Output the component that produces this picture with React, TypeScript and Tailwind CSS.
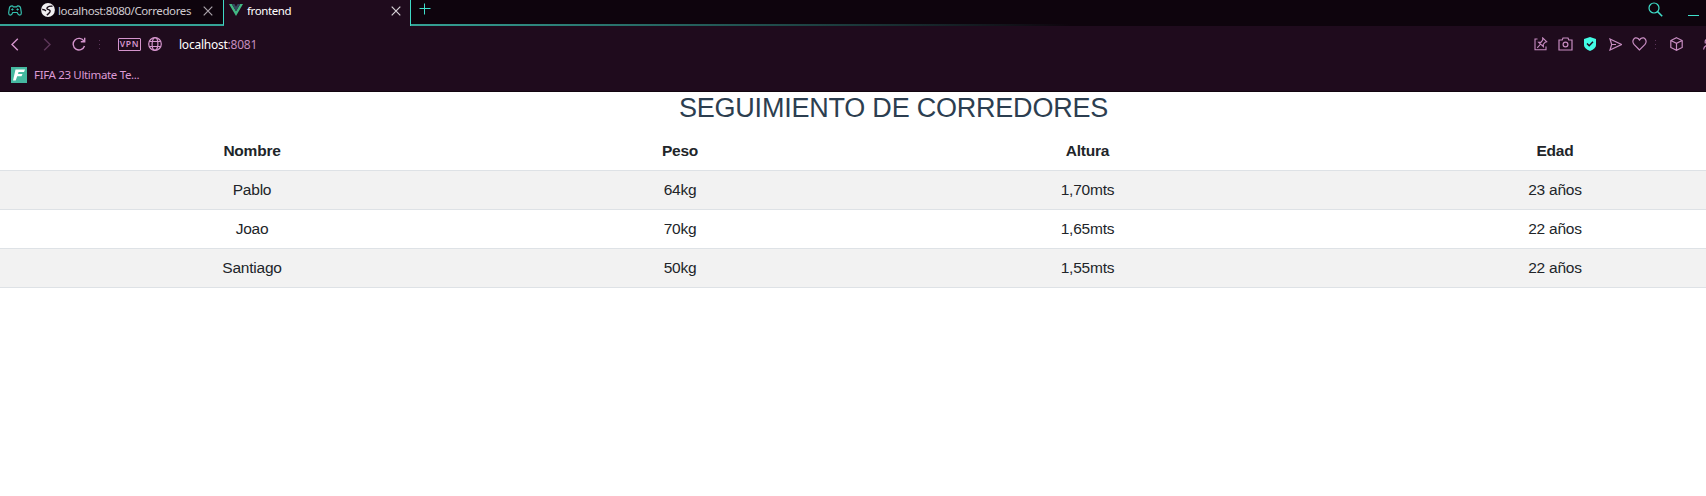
import type { ReactNode } from 'react';

type IconProps = { className?: string; children: ReactNode; viewBox?: string };

function Icon({ className = '', children, viewBox = '0 0 16 16' }: IconProps) {
  return (
    <svg
      viewBox={viewBox}
      fill="none"
      stroke="currentColor"
      strokeWidth="1.2"
      className={`shrink-0 ${className}`}
    >
      {children}
    </svg>
  );
}

function Dots({ className = '' }: { className?: string }) {
  return (
    <div className={`flex w-[1px] shrink-0 flex-col gap-[3px] ${className}`}>
      <i className="h-[1px] w-[1px] bg-[#5a3358]" />
      <i className="h-[1px] w-[1px] bg-[#5a3358]" />
      <i className="h-[1px] w-[1px] bg-[#5a3358]" />
    </div>
  );
}

function TabStrip() {
  return (
    <div className="flex h-[26px] bg-[#0e040d] text-[11.5px] leading-[22px]">
      <div className="flex w-[224px] shrink-0 border-b-2 border-r border-b-[#35a396] border-r-[#3fd9c6] pl-[8px]">
        <Icon className="mt-[5px] h-[11px] w-[14px] text-[#35bfae]" viewBox="0 0 14 11">
          <path d="M4 .8Q1.800.8 1.400 3L.7 7.500Q.5 10 2.300 10.200q1.500 0 2.500-2.700h4.400q1 2.700 2.500 2.700 1.800-.2 1.600-2.700L12.600 3Q12.200.8 10 .8q-.8 0-1.300 1H5.300Q4.800.8 4 .8Z" />
          <path d="M3.200 4.500h2.400M8.400 4.500h2.400M4.400 3.300v2.400M9.600 3.300v2.400" strokeWidth=".9" />
        </Icon>
        <svg viewBox="0 0 14 14" className="ml-[19px] mt-[3px] h-[14px] w-[14px] shrink-0">
          <circle cx="7" cy="7" r="6.900" fill="#f1eff1" />
          <path
            d="M11.500 3.200Q8.500 2.800 6.500 4.200 5 6 7.500 6.700 9.800 7.300 8.800 9.200 7.800 11 5.800 12M1.200 6.500Q3.500 6.300 5 8"
            fill="none"
            stroke="#170b16"
            strokeWidth="1.400"
          />
        </svg>
        <span className="ml-[3px] w-[134px] shrink-0 whitespace-nowrap tracking-[-.39px] text-[#d0cbd0]">
          localhost:8080/Corredores
        </span>
        <Icon className="ml-[11px] mt-[6px] h-[10px] w-[10px] text-[#aaa3aa]" viewBox="0 0 10 10">
          <path d="m.7.7 8.600 8.600m0-8.600L.7 9.300" />
        </Icon>
      </div>
      <div className="flex w-[186px] shrink-0 bg-[#1f0b1d] pl-[5px]">
        <svg viewBox="0 0 14 12" className="mt-[4px] h-[12px] w-[14px] shrink-0">
          <path d="M0 0h2.800L7 7.300 11.200 0H14L7 12Z" fill="#42b883" />
          <path d="M2.800 0h2.600L7 2.800 8.600 0h2.600L7 7.300Z" fill="#35495e" />
        </svg>
        <span className="ml-[4px] w-[130px] tracking-[-.39px] text-white">frontend</span>
        <Icon className="ml-[14px] mt-[6px] h-[10px] w-[10px] text-[#d8d3d8]" viewBox="0 0 10 10">
          <path d="m.7.7 8.600 8.600m0-8.600L.7 9.300" />
        </Icon>
      </div>
      <div className="flex flex-1 flex-col border-l border-[#3fd9c6]">
        <div className="flex flex-1 items-start">
          <Icon className="ml-[8px] mt-[3px] h-[12px] w-[12px] text-[#3fe0cb]" viewBox="0 0 12 12">
            <path d="M.5 5.500h11M5.500.5v11" strokeWidth="1" />
          </Icon>
          <Icon className="ml-auto mr-[25px] mt-[2px] h-[15px] w-[15px] text-[#3fe0cb]" viewBox="0 0 15 15">
            <circle cx="6" cy="6" r="5" />
            <path d="m9.600 9.600 4.600 4.600" strokeWidth="1.500" />
          </Icon>
          <div className="mr-[7px] mt-[15px] h-[1px] w-[11px] bg-[#3fe0cb]" />
        </div>
        <div className="h-[2px] w-[660px] bg-linear-to-r from-[#35a396] to-transparent" />
        </div>
    </div>
  );
}

function Toolbar() {
  return (
    <div className="flex h-[36px] items-center pl-[10px] text-[#d494cc]">
      <Icon className="h-[13px] w-[9px]" viewBox="0 0 9 13">
        <path d="M7.800.7 2 6.500l5.800 5.800" strokeWidth="1.400" />
      </Icon>
      <Icon className="ml-[24px] h-[13px] w-[9px] text-[#5c3658]" viewBox="0 0 9 13">
        <path d="M1.200.7 7 6.500l-5.800 5.800" strokeWidth="1.400" />
      </Icon>
      <Icon className="ml-[20px] h-[14px] w-[14px]" viewBox="0 0 14 14">
        <path d="M12 4.200A5.800 5.800 0 1 0 12.500 9M12.700.8v3.900H8.800" strokeWidth="1.400" />
      </Icon>
      <Dots className="ml-[13px]" />
      <div className="ml-[18px] flex h-[13px] w-[23px] shrink-0 items-center justify-center rounded-[1px] border border-[#d494cc] text-[8.500px] font-semibold tracking-[.7px]">
        VPN
      </div>
      <Icon className="ml-[7px] h-[14px] w-[14px]" viewBox="0 0 14 14">
        <circle cx="7" cy="7" r="6.300" />
        <ellipse cx="7" cy="7" rx="2.900" ry="6.300" />
        <path d="M1.300 4.500h11.400M1.300 9.500h11.400" />
      </Icon>
      <span className="ml-[17px] whitespace-nowrap pt-px text-[12px] tracking-[-.24px] text-white">
        localhost<span className="text-[#c48cbf]">:8081</span>
      </span>
      <div className="ml-auto flex shrink-0 items-center text-[#c78cc1]">
        <Icon className="h-[14px] w-[14px]" viewBox="0 0 14 14">
          <path d="M3.500 2H1v10.800h11V9.500M3.200 10.800l3-3.300M8.700 1l4 3.700-1.500.5-2 2.300.2 2.200-4.700-4.400 2.200.1 1.800-2.400Z" strokeWidth="1.100" />
        </Icon>
        <Icon className="ml-[10px] h-[14px] w-[15px]" viewBox="0 0 15 14">
          <path d="M1 3h3.200L5 1h5l.8 2H14v10H1Z" />
          <circle cx="7.500" cy="7.500" r="2.400" />
        </Icon>
        <svg viewBox="0 0 12 14" className="ml-[11px] h-[14px] w-[12px] shrink-0">
          <path d="m6 0 6 2v6q0 3.500-6 6-6-2.500-6-6V2Z" fill="#43fbe5" />
          <path d="m3 6.500 2.200 2.200L9 4.800" fill="none" stroke="#1f0b1d" strokeWidth="1.500" />
        </svg>
        <Icon className="ml-[13px] h-[13px] w-[13px]" viewBox="0 0 13 13">
          <path d="m1 1 11.500 5.500L1 12l1.700-5.500ZM2.700 6.500H7" />
        </Icon>
        <Icon className="ml-[10px] h-[14px] w-[15px]" viewBox="0 0 15 14">
          <path d="M7.500 13 2 7.400Q.2 5 1.300 2.900 3-.3 6.200 1.500L7.500 3l1.300-1.500Q12-.3 13.700 2.900 14.800 5 13 7.400Z" />
        </Icon>
        <Dots className="ml-[8px]" />
        <Icon className="ml-[14px] h-[14px] w-[13px]" viewBox="0 0 13 14">
          <path d="m6.500.7 5.700 2.800v7L6.500 13.300.8 10.500v-7ZM.8 3.500l5.700 2.900 5.700-2.900M6.500 6.400v6.900" />
        </Icon>
        <Icon className="ml-[20px] h-[14px] w-[3px]" viewBox="0 0 3 14">
          <path d="M3.500 2.500Q1.500 3.500 2.500 6.500M3.500 8.500Q.8 9.500.6 12.500" />
        </Icon>
      </div>
    </div>
  );
}

const columns = ['Nombre', 'Peso', 'Altura', 'Edad'];

const runners = [
  ['Pablo', '64kg', '1,70mts', '23 años'],
  ['Joao', '70kg', '1,65mts', '22 años'],
  ['Santiago', '50kg', '1,55mts', '22 años'],
];

export default function App() {
  return (
    <div className="h-[496px] w-full overflow-hidden bg-white">
      <header className="h-[92px] border-b border-[#12050f] bg-[#1f0b1d] font-['Noto_Sans',sans-serif]">
        <TabStrip />
        <Toolbar />
        <div className="flex h-[26px] items-center pl-[11px]">
          <svg viewBox="0 0 16 16" className="h-[16px] w-[16px]">
            <path d="M0 0h16v16H0Z" fill="#45b8a0" />
            <path d="M4.500 2.500H14L13 5H7.500L7 7h4.500l-1 2.300H6.200L4.700 13.500H2Z" fill="#fff" />
          </svg>
          <span className="ml-[7px] whitespace-nowrap text-[11.500px] tracking-[-.34px] text-[#dc9ad4]">
            FIFA 23 Ultimate Te...
          </span>
        </div>
      </header>
      <main className="w-[1787px] font-['Liberation_Sans',Arial,sans-serif]">
        <h1 className="h-[39px] pt-px text-center text-[27px] leading-[31px] tracking-[-.22px] text-[#2c3e50]">
          SEGUIMIENTO DE CORREDORES
        </h1>
        <table className="w-[1791px] table-fixed border-collapse text-center text-[15.500px] leading-[23px] tracking-[-.23px] text-[#212529]">
          <colgroup>
            <col className="w-[504px]" />
            <col className="w-[352px]" />
            <col className="w-[463px]" />
            <col className="w-[472px]" />
          </colgroup>
          <thead>
            <tr className="h-[39px] border-b border-[#dee2e6]">
              {columns.map((name) => (
                <th key={name} className="p-0 font-bold">
                  {name}
                </th>
              ))}
            </tr>
          </thead>
          <tbody>
            {runners.map((runner) => (
              <tr key={runner[0]} className="h-[39px] border-b border-[#dee2e6] odd:bg-[#f2f2f2]">
                {runner.map((value, i) => (
                  <td key={columns[i]} className="p-0">
                    {value}
                  </td>
                ))}
              </tr>
            ))}
          </tbody>
        </table>
      </main>
    </div>
  );
}
